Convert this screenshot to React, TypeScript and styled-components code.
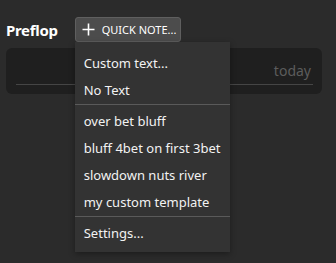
import styled, { createGlobalStyle } from 'styled-components';

const GlobalStyle = createGlobalStyle`
    html, body {
        margin: 0;
        background-color: #2b2b2b;
        font-family: "Noto Sans", "Open Sans", sans-serif;
    }
`;

const Page = styled.div`
    min-height: 100vh;
    box-sizing: border-box;
    padding: 17px 14px 0 6px;
`;

const HeaderRow = styled.div`
    display: flex;
    align-items: center;
    gap: 17px;
    height: 25px;
`;

const Title = styled.h2`
    margin: 0;
    font-size: 15px;
    font-weight: 700;
    letter-spacing: -0.3px;
    color: #ffffff;
`;

const MenuAnchor = styled.div`
    position: relative;
`;

const QuickButton = styled.button`
    display: flex;
    align-items: center;
    gap: 7px;
    width: 106px;
    height: 25px;
    padding: 0 6px;
    background-color: #4c4c4c;
    border: 1px solid #5f5f5f;
    border-radius: 3px;
    color: #ffffff;
    font-family: inherit;
    font-size: 11px;
    white-space: nowrap;

    svg {
        flex-shrink: 0;
    }
`;

const Menu = styled.div`
    position: absolute;
    top: 25px;
    left: 0;
    width: 155px;
    padding: 8px 0 5px;
    background-color: #333333;
    box-shadow: 0 2px 6px rgba(0, 0, 0, 0.35);
    z-index: 10;
`;

const MenuItem = styled.div`
    height: 27px;
    line-height: 27px;
    padding: 0 9px;
    font-size: 13px;
    color: #f2f2f2;
    white-space: nowrap;
`;

const Separator = styled.div`
    height: 1px;
    margin: 0 0 3px;
    background-color: #5a5a5a;
`;

const Card = styled.div`
    margin-top: 6px;
    height: 46px;
    padding: 0 9px 0 10px;
    background-color: #1f1f1f;
    border-radius: 6px;
    display: flex;
    flex-direction: column;
    justify-content: center;
`;

const DateField = styled.div`
    margin-top: 4px;
    padding: 0 2px 4px;
    border-bottom: 1px solid #454545;
    text-align: right;
    font-size: 14px;
    color: #5c5c5c;
`;

const PlusIcon = () => (
    <svg width="13" height="13" viewBox="0 0 13 13">
        <path d="M6.5 0.5v12M0.5 6.5h12" stroke="#ffffff" strokeWidth="1.6" fill="none" />
    </svg>
);

const templates = ['over bet bluff', 'bluff 4bet on first 3bet', 'slowdown nuts river', 'my custom template'];

export default function App() {
    return (
        <>
            <GlobalStyle />
            <Page>
                <HeaderRow>
                    <Title>Preflop</Title>
                    <MenuAnchor>
                        <QuickButton>
                            <PlusIcon />
                            QUICK NOTE...
                        </QuickButton>
                        <Menu>
                            <MenuItem>Custom text...</MenuItem>
                            <MenuItem>No Text</MenuItem>
                            <Separator />
                            {templates.map((t) => (
                                <MenuItem key={t}>{t}</MenuItem>
                            ))}
                            <Separator />
                            <MenuItem>Settings...</MenuItem>
                        </Menu>
                    </MenuAnchor>
                </HeaderRow>
                <Card>
                    <DateField>today</DateField>
                </Card>
            </Page>
        </>
    );
}
